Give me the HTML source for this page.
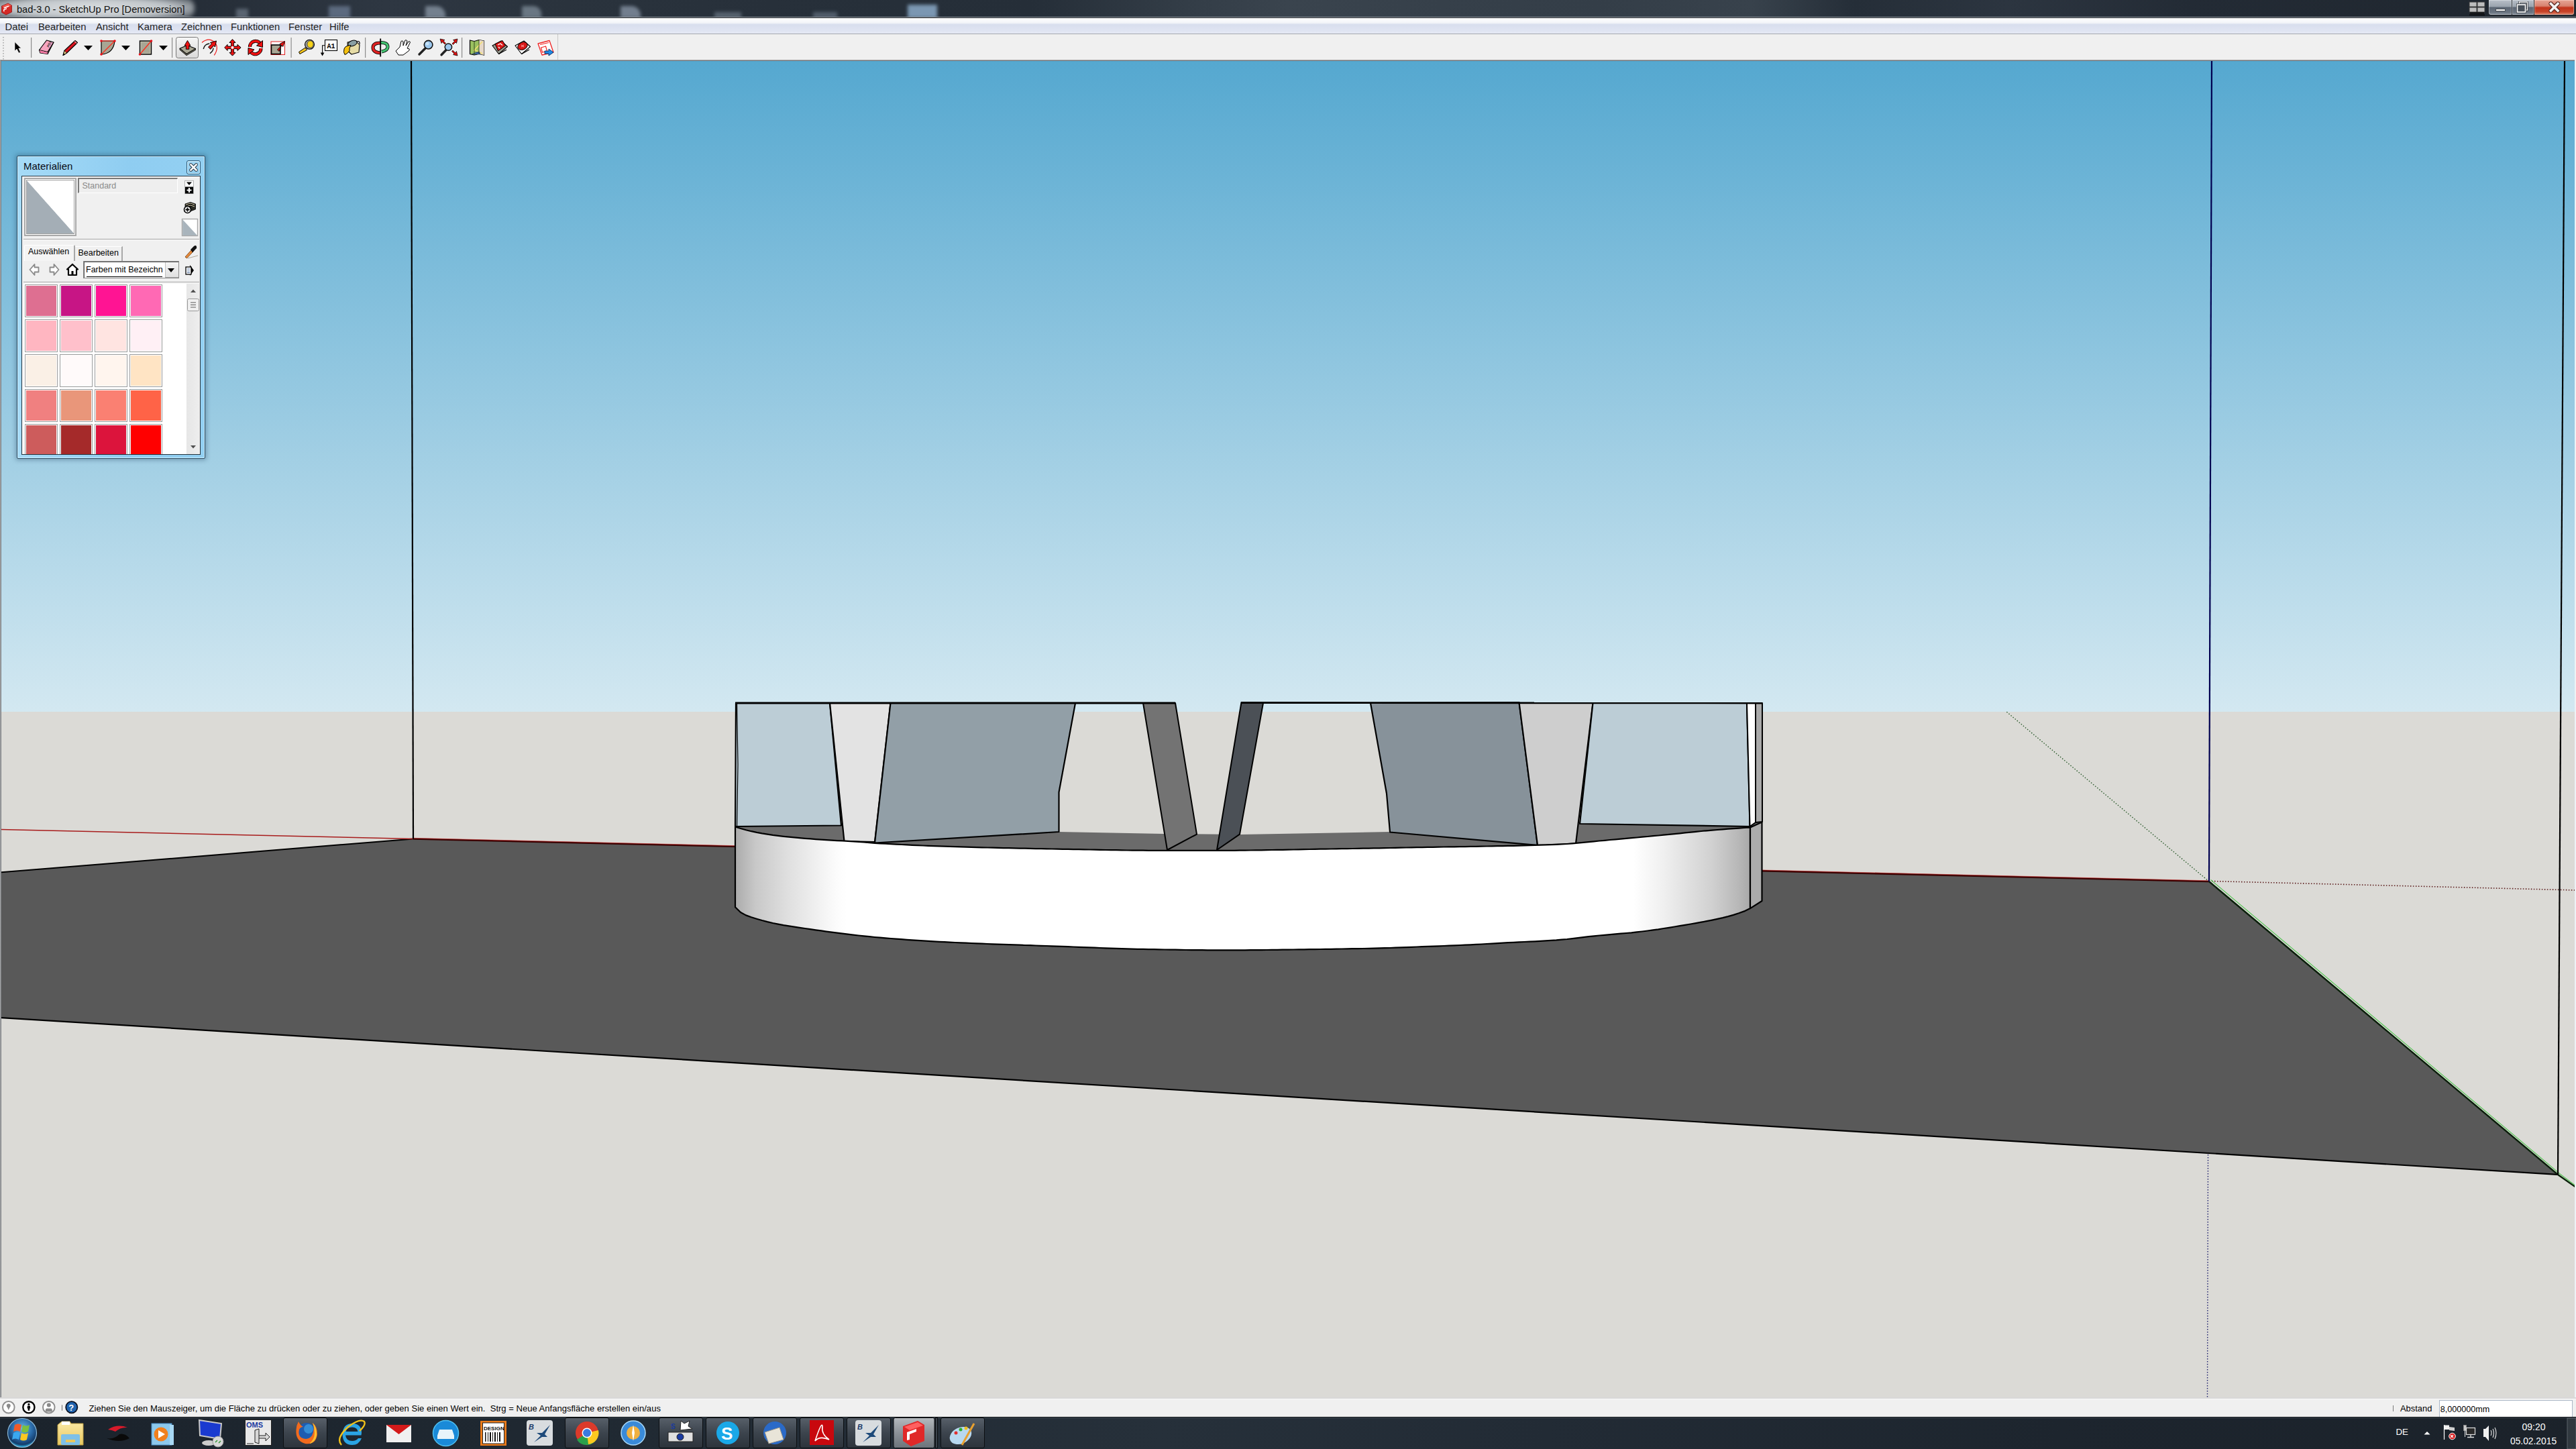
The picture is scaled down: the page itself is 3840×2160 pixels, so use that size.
<!DOCTYPE html>
<html><head><meta charset="utf-8">
<style>
*{margin:0;padding:0;box-sizing:border-box}
html,body{width:3840px;height:2160px;overflow:hidden;background:#f0f0f0;font-family:"Liberation Sans",sans-serif;position:relative}
.a{position:absolute}
#title{left:0;top:0;width:3840px;height:25px;overflow:hidden;background:linear-gradient(90deg,#222a33 0%,#252d37 7%,#2e3742 15%,#2a333d 22%,#27303a 30%,#252e38 40%,#333d47 46%,#3a444e 50%,#36404a 56%,#343e48 62%,#38424c 68%,#252e38 72%,#2c3540 78%,#232b35 85%,#1f262e 100%);}
#glow{left:-20px;top:-6px;width:310px;height:36px;border-radius:18px;background:radial-gradient(ellipse at 50% 50%,rgba(235,238,240,.92) 0%,rgba(220,225,228,.85) 55%,rgba(200,205,210,.0) 100%);filter:blur(3px)}
#ttext{left:25px;top:5.5px;font-size:14.6px;color:#101010;white-space:pre}
.wb{top:0;height:23px;border:1px solid #262b31;border-top:none}
#menu{left:0;top:27px;width:3840px;height:24px;background:linear-gradient(#fdfdfe 0%,#f3f5f9 30%,#d8deee 42%,#dfe4f2 80%,#e6e9f4 100%);border-bottom:1px solid #a4a8ae}
#menu span{position:absolute;top:4.5px;font-size:14.8px;color:#1e1e1e;white-space:pre}
#tb{left:0;top:51px;width:832px;height:38px;background:#f0f0f0;border-right:1px solid #c8c8c8}
#tb2{left:832px;top:51px;width:3008px;height:38px;background:#f0f0f0}
#vpb{left:0;top:89px;width:3840px;height:2px;background:linear-gradient(#a6a6a6 0,#a6a6a6 50%,#737980 50%,#737980 100%)}
#vpl{left:0;top:89px;width:2px;height:1995px;background:linear-gradient(90deg,#b4b4b4,#6a6e74)}
#vpr{left:3838px;top:89px;width:2px;height:1995px;background:#eef2f6}
#status{left:0;top:2083px;width:3840px;height:29px;background:#f0f0f0;border-top:1px solid #dcdcdc}
#task{left:0;top:2112px;width:3840px;height:48px;background:linear-gradient(90deg,#1b232c 0%,#1f2831 20%,#26303a 45%,#222b35 60%,#1d252e 80%,#1b222a 100%);border-top:1px solid #5b6670}
#mat{left:25px;top:232px;width:281px;height:452px;border:1px solid #2c4a60;border-radius:2px;background:linear-gradient(90deg,#a6dbf7 0%,#9ad4f4 30%,#8fcdf1 60%,#93d0f2 100%);box-shadow:0 0 6px 2px rgba(30,60,90,.35), inset 0 0 0 1px #c8ecfc}
.t13{font-size:12.5px;white-space:pre;color:#000}
</style></head><body>
<div id="title" class="a">
<div class="a" style="left:0;top:0;width:1500px;height:26px;filter:blur(2.5px)">
 <div class="a" style="left:352px;top:13px;width:18px;height:14px;background:rgba(150,165,180,.45)"></div>
 <div class="a" style="left:490px;top:9px;width:32px;height:18px;background:rgba(140,160,190,.5)"></div>
 <div class="a" style="left:634px;top:9px;width:30px;height:18px;background:rgba(175,190,205,.55);border-radius:2px 14px 0 0"></div>
 <div class="a" style="left:778px;top:9px;width:29px;height:18px;background:rgba(170,185,200,.5);border-radius:2px 12px 0 0"></div>
 <div class="a" style="left:925px;top:9px;width:30px;height:18px;background:rgba(175,190,210,.55);border-radius:2px 14px 0 0"></div>
 <div class="a" style="left:1065px;top:18px;width:40px;height:9px;background:rgba(160,175,190,.4)"></div>
 <div class="a" style="left:1212px;top:18px;width:36px;height:9px;background:rgba(150,165,185,.4)"></div>
 <div class="a" style="left:1353px;top:7px;width:44px;height:20px;background:rgba(160,195,230,.7)"></div>
</div>
 <div id="glow" class="a"></div>
 <svg class="a" style="left:1px;top:3px" width="18" height="20" viewBox="0 0 18 20">
  <path d="M1.5 6 L11 2 L16.5 5 L16.5 15 L8 19 L1.5 15.5 Z" fill="#d42a26" stroke="#901414" stroke-width=".8"/>
  <path d="M2 6.2 L11 2.5 L16 5.2 L7.5 9 Z" fill="#f05a50"/>
  <path d="M4 8.5 L11.5 5.5 L13 6.5 L5.5 9.8 Z M4 11 L9 9 L9 10.5 L5.5 12 L5.5 14.5 L4 13.8 Z" fill="#fff"/>
 </svg>
 <span id="ttext" class="a">bad-3.0 - SketchUp Pro [Demoversion]</span>
 <svg class="a" style="left:3680px;top:2px" width="26" height="22" viewBox="0 0 26 22">
  <rect x="1" y="1" width="11" height="7" fill="#bdbdbd" stroke="#3a3a3a" stroke-width="1"/><rect x="13" y="1" width="11" height="7" fill="#bdbdbd" stroke="#3a3a3a" stroke-width="1"/>
  <rect x="1" y="9" width="11" height="7" fill="#bdbdbd" stroke="#3a3a3a" stroke-width="1"/><rect x="13" y="9" width="11" height="7" fill="#bdbdbd" stroke="#3a3a3a" stroke-width="1"/>
  <rect x="2" y="16.5" width="21" height="2" fill="#111"/><rect x="1" y="19.5" width="23" height="1.5" fill="#0a0a0a"/>
 </svg>
 <div class="a wb" style="left:3709px;width:36px;border-radius:0 0 0 4px;background:linear-gradient(#b8bfc8 0%,#9aa3ad 45%,#5b6573 50%,#6c7682 85%,#8c96a1 100%);box-shadow:inset 0 0 0 1px rgba(255,255,255,.35)"></div>
 <div class="a" style="left:3720px;top:13px;width:15px;height:4px;background:#fff;border:1px solid #4a4f55"></div>
 <div class="a wb" style="left:3744px;width:34px;background:linear-gradient(#b8bfc8 0%,#9aa3ad 45%,#5b6573 50%,#6c7682 85%,#8c96a1 100%);box-shadow:inset 0 0 0 1px rgba(255,255,255,.35)"></div>
 <svg class="a" style="left:3751px;top:2px" width="20" height="18" viewBox="0 0 20 18">
  <rect x="4.5" y="1" width="12" height="12" fill="none" stroke="#2b2f35" stroke-width="3"/><rect x="4.5" y="1" width="12" height="12" fill="none" stroke="#fff" stroke-width="1.4"/>
  <rect x="1.5" y="5" width="12" height="11" fill="#3d444c" stroke="#2b2f35" stroke-width="3"/><rect x="1.5" y="5" width="12" height="11" fill="#4a525b" stroke="#fff" stroke-width="1.6"/>
 </svg>
 <div class="a wb" style="left:3777px;width:61px;border-radius:0 0 4px 0;background:linear-gradient(#e6a494 0%,#d88370 40%,#c2351c 52%,#c8452a 80%,#e08a70 100%);box-shadow:inset 0 0 0 1px rgba(255,230,220,.45)"></div>
 <svg class="a" style="left:3797px;top:2px" width="22" height="18" viewBox="0 0 22 18">
  <path d="M5.5 3.5 L16 14 M16 3.5 L5.5 14" stroke="#5e2a22" stroke-width="6.2" fill="none" stroke-linecap="round"/>
  <path d="M5.5 3.5 L16 14 M16 3.5 L5.5 14" stroke="#f2f2f2" stroke-width="3.6" fill="none" stroke-linecap="square"/>
 </svg>
</div>
<div class="a" style="left:0;top:25px;width:3840px;height:1px;background:#959da5"></div><div class="a" style="left:0;top:26px;width:3840px;height:1px;background:#1c2024"></div>
<div id="menu" class="a">
<span style="left:7.5px">Datei</span><span style="left:57px">Bearbeiten</span><span style="left:143px">Ansicht</span><span style="left:205px">Kamera</span><span style="left:270px">Zeichnen</span><span style="left:344px">Funktionen</span><span style="left:430px">Fenster</span><span style="left:491px">Hilfe</span>
</div>
<div id="tb" class="a"></div>
<div id="tb2" class="a"></div>
<svg class="a" style="left:0;top:50px" width="840" height="40" viewBox="0 50 840 40">
<defs>
<linearGradient id="btng" x1="0" y1="0" x2="0" y2="1"><stop offset="0" stop-color="#f6f6f6"/><stop offset="1" stop-color="#dadada"/></linearGradient>
</defs>
<!-- grip -->
<g fill="#b4b4b4"><rect x="4" y="55" width="2" height="1.5"/><rect x="4" y="59" width="2" height="1.5"/><rect x="4" y="63" width="2" height="1.5"/><rect x="4" y="67" width="2" height="1.5"/><rect x="4" y="71" width="2" height="1.5"/><rect x="4" y="75" width="2" height="1.5"/><rect x="4" y="79" width="2" height="1.5"/><rect x="4" y="83" width="2" height="1.5"/><rect x="4" y="87" width="2" height="1.5"/></g>
<!-- separators -->
<g fill="#8c8c8c"><rect x="46" y="56" width="1.2" height="30"/><rect x="256" y="56" width="1.2" height="30"/><rect x="433.5" y="56" width="1.2" height="30"/><rect x="544" y="56" width="1.2" height="30"/><rect x="688" y="56" width="1.2" height="30"/></g>
<!-- select arrow -->
<path d="M22 62.5 L22 76 L25 73 L28 79 L30.5 78 L27.8 72 L31.5 72 Z" fill="#000" stroke="#fff" stroke-width=".6"/>
<!-- eraser -->
<path d="M58.5 74.5 L69.5 60 L80 63 L71 80.5 L60 79 Z" fill="#f6a4c0" stroke="#000" stroke-width="1.2" stroke-linejoin="round"/>
<path d="M58.5 74.5 L71 77.5 L80 63 M71 77.5 L71 80.5" fill="none" stroke="#000" stroke-width="1.1"/>
<path d="M59 75 L71 78 L70.8 80.3 L60.2 78.8 Z" fill="#f47aa4"/>
<text x="71" y="72" font-size="5" font-weight="bold" transform="rotate(-62 71 70)" fill="#333">PDX</text>
<!-- pencil -->
<path d="M94 82.5 L96 75.5 L112 60.5 L115.5 63.5 L99.5 79 Z" fill="#d9141e" stroke="#000" stroke-width="1.1" stroke-linejoin="round"/>
<path d="M94 82.5 L96 75.5 L99.5 79 Z" fill="#e8d38a" stroke="#000" stroke-width=".8"/>
<path d="M94 82.5 L95 79.5 L97 81.5 Z" fill="#000"/>
<path d="M111 61.5 L114.5 64.5" stroke="#fff" stroke-width="1"/>
<!-- dropdown triangles -->
<g fill="#000"><path d="M125 68 L138 68 L131.5 75 Z"/><path d="M181 68 L194 68 L187.5 75 Z"/><path d="M237 68 L250 68 L243.5 75 Z"/></g>
<!-- arc/shape icon -->
<path d="M151 61 L151 81 Q169 80 171 61 Z" fill="#a8a694" stroke="#000" stroke-width="1.2"/>
<path d="M151 61 L171 61 M151 81 L171 61" stroke="#ff2a1a" stroke-width="1.2"/>
<g fill="#e8101a"><circle cx="151" cy="61" r="1.8"/><circle cx="171" cy="61" r="1.8"/><circle cx="151" cy="81" r="1.8"/></g>
<!-- rectangle icon -->
<rect x="208.5" y="61" width="17" height="20" fill="#a8a694" stroke="#000" stroke-width="1.4"/>
<rect x="210" y="62.5" width="14" height="17" fill="none" stroke="#c8c6b4" stroke-width=".8"/>
<path d="M208.5 81 L225.5 61" stroke="#ff2a1a" stroke-width="1.3"/>
<g fill="#e8101a"><circle cx="225.5" cy="61" r="1.8"/><circle cx="208.5" cy="81" r="1.8"/></g>
<!-- push/pull selected button -->
<rect x="262.5" y="55.5" width="33" height="31" rx="3" fill="url(#btng)" stroke="#777" stroke-width="1"/>
<path d="M268 72.3 L279 67.5 L291.5 72.6 L278 80.5 Z" fill="#a8a694" stroke="#000" stroke-width="1.1" stroke-linejoin="round"/>
<path d="M268 72.3 L268 74.3 L278 82.7 L291.5 74.6 L291.5 72.6 L278 80.5 Z" fill="#6e6c5e" stroke="#000" stroke-width=".8"/>
<path d="M275 68 L279.5 60.4 L284 68 L281.8 68 L281.8 73.3 L277.3 73.3 L277.3 68 Z" fill="#ee1111" stroke="#000" stroke-width=".9" stroke-linejoin="round"/>
<!-- follow me -->
<path d="M301 63.5 Q311 55 320 63 Q327 71 319.3 82.4" fill="none" stroke="#ee1c1c" stroke-width="1.2"/>
<path d="M303.2 73 Q305 65.5 312.3 65" fill="none" stroke="#111" stroke-width="1.4"/>
<path d="M313 79.6 Q318 76.5 317.9 71.6" fill="none" stroke="#111" stroke-width="1.4"/>
<path d="M310.5 70 L315.5 65.5 L313.5 63.5 L322.5 61 L320.5 70 L318.5 68 L313.8 73.5 Z" fill="#ee1111" stroke="#000" stroke-width="1" stroke-linejoin="round"/>
<!-- move -->
<path d="M346.5 58.6 L351 63.5 L348.3 63.5 L348.3 69.1 L353.9 69.1 L353.9 66.4 L359.1 70.9 L353.9 75.4 L353.9 72.7 L348.3 72.7 L348.3 78.3 L351 78.3 L346.5 83.1 L342 78.3 L344.7 78.3 L344.7 72.7 L339.1 72.7 L339.1 75.4 L334.7 70.9 L339.1 66.4 L339.1 69.1 L344.7 69.1 L344.7 63.5 L342 63.5 Z" fill="#ee1111" stroke="#000" stroke-width="1" stroke-linejoin="round"/>
<rect x="344.7" y="69.1" width="3.6" height="3.6" fill="#fff"/>
<!-- rotate -->
<path d="M372.5 70 A8.5 8.5 0 0 1 388 65" fill="none" stroke="#000" stroke-width="5.2"/>
<path d="M372.5 70 A8.5 8.5 0 0 1 388 65" fill="none" stroke="#ee1111" stroke-width="3.4"/>
<path d="M389 72 A8.5 8.5 0 0 1 373.5 77" fill="none" stroke="#000" stroke-width="5.2"/>
<path d="M389 72 A8.5 8.5 0 0 1 373.5 77" fill="none" stroke="#ee1111" stroke-width="3.4"/>
<path d="M391.5 60.5 L391.5 70.5 L382.5 68 Z" fill="#ee1111" stroke="#000" stroke-width="1"/>
<path d="M370 81.5 L370 71.5 L379 74 Z" fill="#ee1111" stroke="#000" stroke-width="1"/>
<!-- scale -->
<rect x="404" y="62" width="20.5" height="19.5" fill="#fff" stroke="#e02020" stroke-width="1"/>
<rect x="404.5" y="67" width="13.5" height="13.5" fill="#a8a694" stroke="#000" stroke-width="1.6"/>
<path d="M413.5 74 L419.5 68 L417 65.5 L424.5 61.5 L421.8 69.5 L419.8 67.6 L416 76.5 Z" fill="#ee1111" stroke="#000" stroke-width=".9" stroke-linejoin="round"/>
<!-- tape measure -->
<path d="M447 80.5 L445.5 77.5 L455 71 L457.5 74.5 Z" fill="#f2c21a" stroke="#000" stroke-width="1"/>
<circle cx="461.5" cy="66.3" r="7" fill="#9a9a9a" stroke="#000" stroke-width="1.1"/>
<ellipse cx="462.5" cy="66" rx="4.6" ry="5.2" fill="#f6d21a" stroke="#333" stroke-width=".8"/>
<!-- text tool -->
<rect x="484.5" y="59.5" width="18" height="16" fill="#fff" stroke="#000" stroke-width="1.1"/>
<text x="487.5" y="71.5" font-family="Liberation Mono" font-size="10" font-weight="bold" fill="#000">A1</text>
<path d="M484.5 67.7 L480.6 67.7 L480.6 80" fill="none" stroke="#000" stroke-width="1.1"/>
<path d="M477.8 78.5 L483.4 78.5 L480.6 83.5 Z" fill="#000"/>
<!-- paint bucket -->
<path d="M518 63 L530 60.5 L536 67 L535 78 L524 81 L518.5 76 Z" fill="#e6dca6" stroke="#000" stroke-width="1.1" stroke-linejoin="round"/>
<ellipse cx="525.5" cy="64.5" rx="7" ry="4" fill="#8aa0a4" stroke="#000" stroke-width="1" transform="rotate(-20 525.5 64.5)"/>
<path d="M531 62 Q537 60 536 66" fill="none" stroke="#000" stroke-width="1.2"/>
<path d="M513 73 Q514 68 523 67.5 Q520 72 521 76 Q517 81 514 81.5 Q511.5 78 513 73 Z" fill="#f4c010" stroke="#000" stroke-width="1"/>
<!-- orbit -->
<path d="M556 71 Q556 64 567 64" fill="none" stroke="#000" stroke-width="5"/>
<path d="M556 71 Q556 78 567 79" fill="none" stroke="#000" stroke-width="5"/>
<path d="M556 71 Q556 64 567 64 M556 71 Q556 78 567 79" fill="none" stroke="#dd2222" stroke-width="3.4"/>
<path d="M567 63.5 Q578 63 578 70 Q578 75 569 77" fill="none" stroke="#000" stroke-width="5"/>
<path d="M567 63.5 Q578 63 578 70 Q578 75 569 77" fill="none" stroke="#44c070" stroke-width="3.4"/>
<rect x="566.3" y="57.5" width="1.8" height="27" fill="#000"/>
<!-- pan hand -->
<path d="M590 76 L596 70 L598 61.5 Q600 60 601 62 L601 68 L604 60 Q606 59 607 61 L605 68 L609 62 Q611 61 611.5 63 L607 72 L610 73 Q611 75 609 76 L601 82 L594 82 Z" fill="#fff" stroke="#000" stroke-width="1" stroke-linejoin="round"/>
<!-- zoom -->
<path d="M625 81 L634 72" stroke="#222" stroke-width="3.4" stroke-linecap="round"/>
<circle cx="638.6" cy="66.7" r="6.3" fill="#9cc8ee" stroke="#111" stroke-width="1.6"/>
<circle cx="637" cy="65" r="2.5" fill="#c8e4fa"/>
<!-- zoom extents -->
<path d="M658 81.8 L665 74.5" stroke="#222" stroke-width="3.4" stroke-linecap="round"/>
<circle cx="668.4" cy="70.1" r="5.2" fill="#9cc8ee" stroke="#111" stroke-width="1.5"/>
<g fill="#dd1111" stroke="#000" stroke-width=".7" stroke-linejoin="round">
<path d="M656 58 L663 59.5 L661 61 L664.5 64.5 L663 66 L659.5 62.5 L658 64.5 Z"/>
<path d="M682 58 L680.5 64.5 L679 63 L675.5 66.5 L674 65 L677.5 61.5 L675.5 59.5 Z"/>
<path d="M682 83 L675.5 81.5 L677 80 L673.5 76.5 L675 75 L678.5 78.5 L680.5 76.5 Z"/>
</g>
<!-- map -->
<path d="M700.5 60 L707 61.5 L714 59.5 L721.5 61 L721.5 82 L714 80.5 L707 82 L700.5 80.5 Z" fill="#9ac060" stroke="#000" stroke-width="1.2"/>
<path d="M714 59.5 L721.5 61 L721.5 82 L714 80.5 Z" fill="#e6d8c8"/>
<path d="M706 76 L719 62 M707 74 L719 80" stroke="#f2e070" stroke-width="1.6"/>
<path d="M704 80.5 L714 77 L716 81" fill="#3a60a0" stroke="#2a4070" stroke-width="1"/>
<path d="M707 61.5 L707 82 M714 59.5 L714 80.5" stroke="#203010" stroke-width=".8"/>
<!-- warehouse 1 -->
<path d="M734 68 L747 61 L756.5 69.5 L743.5 80.5 Z" fill="#9c9c90" stroke="#000" stroke-width="1.1" stroke-linejoin="round"/>
<path d="M738 65.5 L749 60.5 L753.5 68 L742.5 76 Z" fill="#d81818" stroke="#000" stroke-width="1" stroke-linejoin="round"/>
<path d="M742 67 L746 65 L749 67.5 M743 70 L745 72" stroke="#fff" stroke-width="1.3" fill="none"/>
<path d="M743.5 80.5 L755 74" stroke="#000" stroke-width="1.2"/>
<!-- warehouse 2 -->
<path d="M768 68 L781 61 L790.5 69.5 L777.5 80.5 Z" fill="#fff" stroke="#000" stroke-width="1.1" stroke-linejoin="round"/>
<ellipse cx="779" cy="68.5" rx="7.5" ry="5.5" fill="#d81818" stroke="#000" stroke-width=".9" transform="rotate(-25 779 68.5)"/>
<path d="M777 67 L781 70 M781 67 L777 70" stroke="#fbb" stroke-width="1"/>
<path d="M777.5 80.5 L789 74" stroke="#000" stroke-width="1.2"/>
<!-- export -->
<path d="M802 65 L819 60.5 L825 78 L808 82 Z" fill="#fff" stroke="#ee2222" stroke-width="1.3" stroke-linejoin="round"/>
<path d="M805 66.5 L818 63.5 M806.5 71 L813.5 69 L815.5 76 L808.5 78 Z" fill="none" stroke="#ee2222" stroke-width="1.2"/>
<path d="M812 76 L818 76 L818 73 L825 78 L818 83 L818 80 L812 80 Z" fill="#1e8ae6" stroke="#0a2a60" stroke-width=".9" stroke-linejoin="round"/>
</svg>

<div id="vpb" class="a"></div>
<svg class="a" style="left:0;top:0" width="3840" height="2160" viewBox="0 0 3840 2160">
<defs>
<linearGradient id="sky" x1="0" y1="91" x2="0" y2="1061" gradientUnits="userSpaceOnUse">
<stop offset="0" stop-color="#55a8d0"/><stop offset="1" stop-color="#d3e8f1"/>
</linearGradient>
<clipPath id="vpc"><rect x="2" y="91" width="3836" height="1992"/></clipPath>
</defs>
<g clip-path="url(#vpc)">
<rect x="0" y="91" width="3840" height="970" fill="url(#sky)"/>
<rect x="0" y="1061" width="3840" height="1022" fill="#dbdad6"/>
<polygon points="0,1300.5 616,1250.5 3293,1314 3813,1751 0,1517" fill="#595959"/>
<polyline points="0,1300.5 616,1250.5" stroke="#000" stroke-width="2" fill="none"/>
<polyline points="0,1517 3813,1751" stroke="#000" stroke-width="2.2" fill="none"/>
<polyline points="0,1236.5 616,1250.5" stroke="#a81c1c" stroke-width="1.5" fill="none"/>
<polyline points="616,1250.5 3293,1314" stroke="#3a0000" stroke-width="2.6" fill="none"/>
<polyline points="616,1249.3 3293,1312.8" stroke="#d03030" stroke-width="1" fill="none" opacity=".6"/>
<polyline points="3297,1313.5 3840,1327" stroke="#5a1a1a" stroke-width="1.6" stroke-dasharray="1.5 2.5" fill="none"/>
<polyline points="3293,1314 2991,1061" stroke="#2a5a2a" stroke-width="1.4" stroke-dasharray="1.5 2.5" fill="none"/>
<polyline points="3293,1314 3813,1751 3840,1770" stroke="#0a200a" stroke-width="2.4" fill="none"/>
<polyline points="3295.5,1311.5 3815.5,1749.5 3840,1768" stroke="#40c040" stroke-width="1.2" fill="none" opacity="0.85"/>
<polyline points="3297,91 3293,1314" stroke="#000050" stroke-width="2.2" fill="none"/>
<polyline points="3291.5,1721 3290.5,2083" stroke="#1a1a6a" stroke-width="1.4" stroke-dasharray="1.5 2.5" fill="none"/>
<polyline points="613,91 616,1250.5" stroke="#000" stroke-width="2.2" fill="none"/>
<polyline points="3823,91 3813,1751" stroke="#000" stroke-width="2.2" fill="none"/>
<polygon points="1096.0,1228.0 1254.0,1228.0 1400.0,1250.0 1578.0,1240.0 1735.0,1243.0 1850.0,1244.0 2072.0,1240.0 2300.0,1245.0 2354.0,1228.0 2627.0,1224.0 2609.0,1233.4 2608.0,1233.5 2600.0,1234.0 2592.0,1234.6 2584.0,1235.1 2576.0,1235.7 2568.0,1236.3 2560.0,1237.0 2552.0,1237.6 2544.0,1238.3 2536.0,1239.0 2528.0,1239.8 2520.0,1240.6 2512.0,1241.4 2504.0,1242.3 2496.0,1243.1 2488.0,1243.9 2480.0,1244.7 2472.0,1245.5 2464.0,1246.2 2456.0,1247.0 2448.0,1247.7 2440.0,1248.5 2432.0,1249.2 2424.0,1249.9 2416.0,1250.6 2408.0,1251.3 2400.0,1252.0 2392.0,1252.8 2384.0,1253.5 2376.0,1254.3 2368.0,1255.1 2360.0,1255.9 2352.0,1256.7 2344.0,1257.4 2336.0,1258.0 2328.0,1258.5 2320.0,1258.9 2312.0,1259.2 2304.0,1259.5 2296.0,1259.7 2288.0,1259.9 2280.0,1260.2 2272.0,1260.4 2264.0,1260.6 2256.0,1260.8 2248.0,1260.9 2240.0,1261.1 2232.0,1261.2 2224.0,1261.4 2216.0,1261.5 2208.0,1261.7 2200.0,1261.8 2192.0,1261.9 2184.0,1262.1 2176.0,1262.2 2168.0,1262.3 2160.0,1262.4 2152.0,1262.5 2144.0,1262.7 2136.0,1262.8 2128.0,1262.9 2120.0,1263.1 2112.0,1263.2 2104.0,1263.4 2096.0,1263.5 2088.0,1263.7 2080.0,1263.8 2072.0,1264.0 2064.0,1264.1 2056.0,1264.3 2048.0,1264.4 2040.0,1264.6 2032.0,1264.7 2024.0,1264.8 2016.0,1265.0 2008.0,1265.1 2000.0,1265.2 1992.0,1265.4 1984.0,1265.5 1976.0,1265.6 1968.0,1265.7 1960.0,1265.9 1952.0,1266.0 1944.0,1266.2 1936.0,1266.3 1928.0,1266.5 1920.0,1266.6 1912.0,1266.8 1904.0,1266.9 1896.0,1267.0 1888.0,1267.2 1880.0,1267.3 1872.0,1267.4 1864.0,1267.5 1856.0,1267.6 1848.0,1267.7 1840.0,1267.8 1832.0,1267.8 1824.0,1267.9 1816.0,1267.9 1808.0,1267.9 1800.0,1267.9 1792.0,1267.9 1784.0,1267.9 1776.0,1267.9 1768.0,1267.9 1760.0,1267.9 1752.0,1267.9 1744.0,1267.9 1736.0,1267.9 1728.0,1267.9 1720.0,1267.8 1712.0,1267.8 1704.0,1267.7 1696.0,1267.7 1688.0,1267.6 1680.0,1267.5 1672.0,1267.4 1664.0,1267.2 1656.0,1267.1 1648.0,1267.0 1640.0,1266.8 1632.0,1266.7 1624.0,1266.5 1616.0,1266.4 1608.0,1266.2 1600.0,1266.1 1592.0,1265.9 1584.0,1265.8 1576.0,1265.7 1568.0,1265.5 1560.0,1265.4 1552.0,1265.2 1544.0,1265.1 1536.0,1264.9 1528.0,1264.7 1520.0,1264.6 1512.0,1264.4 1504.0,1264.2 1496.0,1264.1 1488.0,1263.9 1480.0,1263.7 1472.0,1263.5 1464.0,1263.3 1456.0,1263.1 1448.0,1262.9 1440.0,1262.6 1432.0,1262.4 1424.0,1262.2 1416.0,1261.9 1408.0,1261.7 1400.0,1261.4 1392.0,1261.1 1384.0,1260.8 1376.0,1260.5 1368.0,1260.2 1360.0,1259.8 1352.0,1259.4 1344.0,1259.0 1336.0,1258.6 1328.0,1258.2 1320.0,1257.7 1312.0,1257.3 1304.0,1256.8 1296.0,1256.2 1288.0,1255.5 1280.0,1254.9 1272.0,1254.3 1264.0,1253.9 1256.0,1253.4 1248.0,1253.1 1240.0,1252.7 1232.0,1252.2 1224.0,1251.7 1216.0,1251.1 1208.0,1250.4 1200.0,1249.8 1192.0,1249.1 1184.0,1248.3 1176.0,1247.6 1168.0,1246.8 1160.0,1245.9 1152.0,1244.9 1144.0,1243.7 1136.0,1242.4 1128.0,1240.9 1120.0,1239.2 1112.0,1237.2 1104.0,1235.0 1096.0,1232.5" fill="#6b6b6b"/>
<polygon points="1097.0,1048.0 1237.0,1048.0 1254.0,1230.5 1096.0,1232.0" fill="#bccdd6" stroke="#000" stroke-width="2.2" stroke-linejoin="round"/>
<polygon points="1237.0,1048.0 1327.5,1048.0 1304.0,1255.0 1258.5,1254.0" fill="#e3e3e3" stroke="#000" stroke-width="2.2" stroke-linejoin="round"/>
<polygon points="1327.5,1048.0 1603.0,1048.0 1578.5,1181.0 1578.5,1240.0 1304.0,1256.5" fill="#929fa7" stroke="#000" stroke-width="2.2" stroke-linejoin="round"/>
<polygon points="1704.0,1048.0 1752.0,1048.0 1784.0,1243.6 1740.0,1267.0" fill="#737373" stroke="#000" stroke-width="2" stroke-linejoin="round"/>
<polygon points="1850.5,1047.0 1883.0,1048.0 1848.0,1243.6 1814.0,1267.0" fill="#4b5056" stroke="#000" stroke-width="2" stroke-linejoin="round"/>
<polygon points="2043.0,1048.0 2264.6,1047.0 2292.0,1260.0 2072.0,1240.5 2067.0,1183.0" fill="#87929a" stroke="#000" stroke-width="2.2" stroke-linejoin="round"/>
<polygon points="2264.6,1048.0 2374.5,1048.0 2349.0,1257.6 2292.0,1260.0" fill="#cecece" stroke="#000" stroke-width="2.2" stroke-linejoin="round"/>
<polygon points="2374.5,1048.0 2604.0,1048.0 2608.5,1232.0 2355.0,1228.0" fill="#bccdd6" stroke="#000" stroke-width="2.2" stroke-linejoin="round"/>
<polygon points="2604.0,1048.0 2617.0,1048.0 2617.0,1226.0 2608.5,1232.0" fill="#ffffff" stroke="#000" stroke-width="2" stroke-linejoin="round"/>
<polygon points="2617.0,1048.0 2627.0,1048.0 2627.0,1225.0 2617.0,1226.0" fill="#a9a9a9" stroke="#000" stroke-width="2" stroke-linejoin="round"/>
<linearGradient id="bandg" x1="1096" y1="0" x2="2609" y2="0" gradientUnits="userSpaceOnUse"><stop offset="0" stop-color="#ababab"/><stop offset="0.02" stop-color="#c8c8c8"/><stop offset="0.05" stop-color="#dedede"/><stop offset="0.08" stop-color="#f0f0f0"/><stop offset="0.1" stop-color="#fcfcfc"/><stop offset="0.11" stop-color="#fff"/><stop offset="0.885" stop-color="#fff"/><stop offset="0.914" stop-color="#f0f0f0"/><stop offset="0.963" stop-color="#d0d0d0"/><stop offset="0.988" stop-color="#b8b8b8"/><stop offset="1" stop-color="#a8a8a8"/></linearGradient>
<polygon points="1096.0,1232.5 1104.0,1235.0 1112.0,1237.2 1120.0,1239.2 1128.0,1240.9 1136.0,1242.4 1144.0,1243.7 1152.0,1244.9 1160.0,1245.9 1168.0,1246.8 1176.0,1247.6 1184.0,1248.3 1192.0,1249.1 1200.0,1249.8 1208.0,1250.4 1216.0,1251.1 1224.0,1251.7 1232.0,1252.2 1240.0,1252.7 1248.0,1253.1 1256.0,1253.4 1264.0,1253.9 1272.0,1254.3 1280.0,1254.9 1288.0,1255.5 1296.0,1256.2 1304.0,1256.8 1312.0,1257.3 1320.0,1257.7 1328.0,1258.2 1336.0,1258.6 1344.0,1259.0 1352.0,1259.4 1360.0,1259.8 1368.0,1260.2 1376.0,1260.5 1384.0,1260.8 1392.0,1261.1 1400.0,1261.4 1408.0,1261.7 1416.0,1261.9 1424.0,1262.2 1432.0,1262.4 1440.0,1262.6 1448.0,1262.9 1456.0,1263.1 1464.0,1263.3 1472.0,1263.5 1480.0,1263.7 1488.0,1263.9 1496.0,1264.1 1504.0,1264.2 1512.0,1264.4 1520.0,1264.6 1528.0,1264.7 1536.0,1264.9 1544.0,1265.1 1552.0,1265.2 1560.0,1265.4 1568.0,1265.5 1576.0,1265.7 1584.0,1265.8 1592.0,1265.9 1600.0,1266.1 1608.0,1266.2 1616.0,1266.4 1624.0,1266.5 1632.0,1266.7 1640.0,1266.8 1648.0,1267.0 1656.0,1267.1 1664.0,1267.2 1672.0,1267.4 1680.0,1267.5 1688.0,1267.6 1696.0,1267.7 1704.0,1267.7 1712.0,1267.8 1720.0,1267.8 1728.0,1267.9 1736.0,1267.9 1744.0,1267.9 1752.0,1267.9 1760.0,1267.9 1768.0,1267.9 1776.0,1267.9 1784.0,1267.9 1792.0,1267.9 1800.0,1267.9 1808.0,1267.9 1816.0,1267.9 1824.0,1267.9 1832.0,1267.8 1840.0,1267.8 1848.0,1267.7 1856.0,1267.6 1864.0,1267.5 1872.0,1267.4 1880.0,1267.3 1888.0,1267.2 1896.0,1267.0 1904.0,1266.9 1912.0,1266.8 1920.0,1266.6 1928.0,1266.5 1936.0,1266.3 1944.0,1266.2 1952.0,1266.0 1960.0,1265.9 1968.0,1265.7 1976.0,1265.6 1984.0,1265.5 1992.0,1265.4 2000.0,1265.2 2008.0,1265.1 2016.0,1265.0 2024.0,1264.8 2032.0,1264.7 2040.0,1264.6 2048.0,1264.4 2056.0,1264.3 2064.0,1264.1 2072.0,1264.0 2080.0,1263.8 2088.0,1263.7 2096.0,1263.5 2104.0,1263.4 2112.0,1263.2 2120.0,1263.1 2128.0,1262.9 2136.0,1262.8 2144.0,1262.7 2152.0,1262.5 2160.0,1262.4 2168.0,1262.3 2176.0,1262.2 2184.0,1262.1 2192.0,1261.9 2200.0,1261.8 2208.0,1261.7 2216.0,1261.5 2224.0,1261.4 2232.0,1261.2 2240.0,1261.1 2248.0,1260.9 2256.0,1260.8 2264.0,1260.6 2272.0,1260.4 2280.0,1260.2 2288.0,1259.9 2296.0,1259.7 2304.0,1259.5 2312.0,1259.2 2320.0,1258.9 2328.0,1258.5 2336.0,1258.0 2344.0,1257.4 2352.0,1256.7 2360.0,1255.9 2368.0,1255.1 2376.0,1254.3 2384.0,1253.5 2392.0,1252.8 2400.0,1252.0 2408.0,1251.3 2416.0,1250.6 2424.0,1249.9 2432.0,1249.2 2440.0,1248.5 2448.0,1247.7 2456.0,1247.0 2464.0,1246.2 2472.0,1245.5 2480.0,1244.7 2488.0,1243.9 2496.0,1243.1 2504.0,1242.3 2512.0,1241.4 2520.0,1240.6 2528.0,1239.8 2536.0,1239.0 2544.0,1238.3 2552.0,1237.6 2560.0,1237.0 2568.0,1236.3 2576.0,1235.7 2584.0,1235.1 2592.0,1234.6 2600.0,1234.0 2608.0,1233.5 2609.0,1233.4 2609.0,1353.9 2608.0,1354.5 2600.0,1358.4 2592.0,1361.3 2584.0,1363.9 2576.0,1366.1 2568.0,1368.1 2560.0,1369.9 2552.0,1371.6 2544.0,1373.2 2536.0,1374.7 2528.0,1376.1 2520.0,1377.5 2512.0,1378.8 2504.0,1380.1 2496.0,1381.5 2488.0,1382.8 2480.0,1384.0 2472.0,1385.3 2464.0,1386.4 2456.0,1387.5 2448.0,1388.5 2440.0,1389.4 2432.0,1390.3 2424.0,1391.0 2416.0,1391.7 2408.0,1392.4 2400.0,1393.1 2392.0,1393.8 2384.0,1394.5 2376.0,1395.3 2368.0,1396.2 2360.0,1397.2 2352.0,1398.1 2344.0,1399.1 2336.0,1400.0 2328.0,1400.7 2320.0,1401.4 2312.0,1401.9 2304.0,1402.4 2296.0,1402.9 2288.0,1403.3 2280.0,1403.6 2272.0,1404.0 2264.0,1404.4 2256.0,1404.8 2248.0,1405.2 2240.0,1405.6 2232.0,1406.1 2224.0,1406.6 2216.0,1407.0 2208.0,1407.5 2200.0,1407.9 2192.0,1408.3 2184.0,1408.7 2176.0,1409.0 2168.0,1409.4 2160.0,1409.7 2152.0,1410.0 2144.0,1410.3 2136.0,1410.6 2128.0,1410.8 2120.0,1411.2 2112.0,1411.5 2104.0,1411.8 2096.0,1412.1 2088.0,1412.4 2080.0,1412.7 2072.0,1413.0 2064.0,1413.2 2056.0,1413.4 2048.0,1413.6 2040.0,1413.8 2032.0,1414.0 2024.0,1414.1 2016.0,1414.2 2008.0,1414.4 2000.0,1414.5 1992.0,1414.6 1984.0,1414.8 1976.0,1414.9 1968.0,1415.0 1960.0,1415.1 1952.0,1415.2 1944.0,1415.3 1936.0,1415.4 1928.0,1415.5 1920.0,1415.6 1912.0,1415.7 1904.0,1415.8 1896.0,1415.9 1888.0,1416.0 1880.0,1416.1 1872.0,1416.1 1864.0,1416.2 1856.0,1416.3 1848.0,1416.3 1840.0,1416.4 1832.0,1416.4 1824.0,1416.4 1816.0,1416.4 1808.0,1416.3 1800.0,1416.3 1792.0,1416.2 1784.0,1416.1 1776.0,1416.1 1768.0,1416.0 1760.0,1415.9 1752.0,1415.7 1744.0,1415.6 1736.0,1415.5 1728.0,1415.4 1720.0,1415.2 1712.0,1415.1 1704.0,1414.9 1696.0,1414.8 1688.0,1414.6 1680.0,1414.4 1672.0,1414.1 1664.0,1413.9 1656.0,1413.6 1648.0,1413.3 1640.0,1413.0 1632.0,1412.7 1624.0,1412.4 1616.0,1412.1 1608.0,1411.8 1600.0,1411.5 1592.0,1411.2 1584.0,1410.9 1576.0,1410.6 1568.0,1410.3 1560.0,1410.0 1552.0,1409.8 1544.0,1409.5 1536.0,1409.2 1528.0,1409.0 1520.0,1408.7 1512.0,1408.4 1504.0,1408.1 1496.0,1407.8 1488.0,1407.6 1480.0,1407.3 1472.0,1407.0 1464.0,1406.7 1456.0,1406.3 1448.0,1406.0 1440.0,1405.7 1432.0,1405.3 1424.0,1405.0 1416.0,1404.6 1408.0,1404.2 1400.0,1403.8 1392.0,1403.4 1384.0,1402.9 1376.0,1402.4 1368.0,1401.9 1360.0,1401.4 1352.0,1400.8 1344.0,1400.2 1336.0,1399.6 1328.0,1399.0 1320.0,1398.3 1312.0,1397.7 1304.0,1397.0 1296.0,1396.2 1288.0,1395.4 1280.0,1394.5 1272.0,1393.6 1264.0,1392.7 1256.0,1391.7 1248.0,1390.7 1240.0,1389.7 1232.0,1388.6 1224.0,1387.4 1216.0,1386.3 1208.0,1385.1 1200.0,1384.0 1192.0,1382.9 1184.0,1381.7 1176.0,1380.4 1168.0,1379.1 1160.0,1377.6 1152.0,1376.0 1144.0,1374.1 1136.0,1372.0 1128.0,1369.7 1120.0,1367.3 1112.0,1364.4 1104.0,1360.0 1096.0,1352.2" fill="url(#bandg)" stroke="#000" stroke-width="2.2" stroke-linejoin="round"/>
<polygon points="2609.0,1233.4 2626.5,1225.5 2626.5,1343.0 2609.0,1354.1" fill="#ababab" stroke="#000" stroke-width="2.2" stroke-linejoin="round"/>
<polyline points="1096,1048 1752,1048" stroke="#000" stroke-width="2.8" fill="none"/>
<polyline points="1850,1047.5 2627,1048" stroke="#000" stroke-width="2.8" fill="none"/>
<polyline points="1098.5,1049 1100,1140 1098.5,1232" stroke="#000" stroke-width="1.2" fill="none"/>
</g>
</svg>
<div id="vpl" class="a"></div>
<div id="vpr" class="a"></div>
<div id="mat" class="a">
 <span class="a" style="left:9px;top:5.5px;font-size:15px;color:#0a0a14;white-space:pre">Materialien</span>
 <div class="a" style="left:252px;top:5.5px;width:21px;height:21px;border:1px solid #2f5a78;border-radius:3px;background:linear-gradient(#a4d8f4,#90ccee);box-shadow:inset 0 0 0 1px #cdeefc"></div>
 <svg class="a" style="left:255px;top:8.5px" width="15" height="15" viewBox="0 0 15 15"><path d="M3.5 3.5 L11.5 11.5 M11.5 3.5 L3.5 11.5" stroke="#2a3a48" stroke-width="4.6" stroke-linecap="round"/><path d="M3.5 3.5 L11.5 11.5 M11.5 3.5 L3.5 11.5" stroke="#fff" stroke-width="2.6" stroke-linecap="square"/></svg>
 <div class="a" style="left:6px;top:28.5px;width:267px;height:416px;background:#f0f0f0;border:1px solid #24323c;box-shadow:inset 1px 1px 0 #fff">
  <!-- preview swatch -->
  <div class="a" style="left:3px;top:2px;width:78px;height:87px;border:2px solid #a8a8a8;box-shadow:inset 0 0 0 1px #fff, inset 0 0 0 2px #a0a0a0;background:linear-gradient(to top right,#a4aeb6 0%,#a4aeb6 49.6%,#fff 50.4%,#fff 100%)"></div>
  <!-- name field -->
  <div class="a" style="left:83px;top:2.5px;width:149px;height:23px;background:#eeeeee;border-top:2px solid #7a7a7a;border-left:2px solid #7a7a7a;border-bottom:1px solid #fff;border-right:1px solid #fff"></div>
  <span class="a t13" style="left:89.5px;top:7px;color:#8a8a8a">Standard</span>
  <!-- right icons -->
  <svg class="a" style="left:236px;top:3px" width="30" height="92" viewBox="236 4 30 92">
   <rect x="242.5" y="7.3" width="13" height="19.3" fill="#fff" stroke="#b0b0b0" stroke-width="1"/>
   <rect x="243" y="16.5" width="12" height="10" fill="#000"/>
   <path d="M245 9.5 L253 9.5 L249 14 Z" fill="#000"/>
   <path d="M249 18 L249 25 M245.5 21.5 L252.5 21.5" stroke="#fff" stroke-width="2.2"/>
   <path d="M243 42 L251 39.5 L258.5 42 L258.5 50 L250.5 53 L243 50 Z" fill="#2a2a24" stroke="#000" stroke-width=".8"/>
   <path d="M244 43 L251 41 L257 43 M244 46 L251 44 L257 46" stroke="#c8c0a0" stroke-width="1"/>
   <circle cx="246.5" cy="50.5" r="5" fill="#fff" stroke="#000" stroke-width="1.6"/>
   <path d="M246.5 47.5 L246.5 53.5 M243.5 50.5 L249.5 50.5" stroke="#000" stroke-width="1.8"/>
   <rect x="238.5" y="64.5" width="23" height="25" fill="#fff" stroke="#a8a8a8" stroke-width="1.4"/>
   <path d="M239.2 65.2 L261 89 L239.2 89 Z" fill="#a9b4bc"/>
  </svg>
  <div class="a" style="left:2px;top:93.5px;width:262px;height:2px;border-top:1px solid #a0a0a0;border-bottom:1px solid #fff"></div>
  <!-- tabs -->
  <div class="a" style="left:3px;top:102px;width:76px;height:24px;background:#f4f4f4;border-right:2px solid #a8a8a8;border-top:1px solid #fff;border-left:1px solid #fff;border-radius:2px 2px 0 0"></div>
  <span class="a t13" style="left:9px;top:105.5px">Auswählen</span>
  <div class="a" style="left:79px;top:104px;width:71px;height:22px;border-right:2px solid #a8a8a8;border-top:1px solid #fff"></div>
  <span class="a t13" style="left:83.5px;top:107.5px">Bearbeiten</span>
  <svg class="a" style="left:238px;top:100px" width="26" height="24" viewBox="0 0 26 24">
   <path d="M5 20 L14 10 L16.5 12.5 L7.5 22 Z" fill="#e88a3a" stroke="#6a3a10" stroke-width=".8"/>
   <path d="M13 9 L18 4 Q21 2 22 4.5 Q23 6.5 20.5 8.5 L16 13.5 Z" fill="#111"/>
   <path d="M9 22 L24 18" stroke="#b0a898" stroke-width="1"/>
  </svg>
  <!-- nav -->
  <svg class="a" style="left:8px;top:126.5px" width="85" height="26" viewBox="0 0 85 26">
   <path d="M3.5 13 L10.5 5 L10.5 9.5 L16.5 9.5 L16.5 16.5 L10.5 16.5 L10.5 21 Z" fill="#fff" stroke="#8a8a8a" stroke-width="1.8" stroke-linejoin="round"/>
   <path d="M46.5 13 L39.5 5 L39.5 9.5 L33.5 9.5 L33.5 16.5 L39.5 16.5 L39.5 21 Z" fill="#fff" stroke="#8a8a8a" stroke-width="1.8" stroke-linejoin="round"/>
   <path d="M59 12.5 L67 5 L75 12.5 L73 12.5 L73 21 L61 21 L61 12.5 Z" fill="#fff" stroke="#000" stroke-width="2.2" stroke-linejoin="round"/>
   <rect x="65.5" y="15" width="3" height="6" fill="#000"/>
  </svg>
  <div class="a" style="left:90.5px;top:126.5px;width:143px;height:26px;background:#fff;border:1px solid #8a8a8a;box-shadow:inset 1px 1px 0 #5a5a5a"></div>
  <span class="a t13" style="left:95px;top:132.5px">Farben mit Bezeichn</span>
  <div class="a" style="left:95.5px;top:149px;width:113px;height:1.4px;background:#000"></div>
  <div class="a" style="left:212.5px;top:128px;width:20px;height:23px;background:linear-gradient(#f4f4f4,#e0e0e0);border-left:1px solid #c0c0c0;border-bottom:1px solid #a0a0a0"></div>
  <svg class="a" style="left:215px;top:136px" width="14" height="8" viewBox="0 0 14 8"><path d="M2 1 L12 1 L7 7 Z" fill="#000"/></svg>
  <svg class="a" style="left:241px;top:127px" width="18" height="26" viewBox="0 0 18 26">
   <path d="M9 5 L15 13 L9 21 Z" fill="#000"/>
   <rect x="3" y="8" width="8" height="11" fill="#fff" stroke="#000" stroke-width="1.3"/>
   <path d="M5 11 L9 11 M5 14 L9 14 M5 16.5 L9 16.5" stroke="#4a6a9a" stroke-width="1"/>
  </svg>
  <div class="a" style="left:2px;top:157px;width:262px;height:2px;border-top:1px solid #a0a0a0;border-bottom:1px solid #fff"></div>
  <!-- list -->
  <div class="a" style="left:1.5px;top:160px;width:243px;height:254px;background:#fff;overflow:hidden">
   <div class="a" style="left:2.2px;top:1.4px;width:49.5px;height:49px;border:1px solid #9a9a9a;background:#fff;padding:1px"><div style="width:100%;height:100%;background:#de6f91"></div></div><div class="a" style="left:54.2px;top:1.4px;width:49.5px;height:49px;border:1px solid #9a9a9a;background:#fff;padding:1px"><div style="width:100%;height:100%;background:#c71585"></div></div><div class="a" style="left:106.2px;top:1.4px;width:49.5px;height:49px;border:1px solid #9a9a9a;background:#fff;padding:1px"><div style="width:100%;height:100%;background:#ff1493"></div></div><div class="a" style="left:158.2px;top:1.4px;width:49.5px;height:49px;border:1px solid #9a9a9a;background:#fff;padding:1px"><div style="width:100%;height:100%;background:#ff69b4"></div></div><div class="a" style="left:2.2px;top:53.4px;width:49.5px;height:49px;border:1px solid #9a9a9a;background:#fff;padding:1px"><div style="width:100%;height:100%;background:#ffb6c1"></div></div><div class="a" style="left:54.2px;top:53.4px;width:49.5px;height:49px;border:1px solid #9a9a9a;background:#fff;padding:1px"><div style="width:100%;height:100%;background:#ffc0cb"></div></div><div class="a" style="left:106.2px;top:53.4px;width:49.5px;height:49px;border:1px solid #9a9a9a;background:#fff;padding:1px"><div style="width:100%;height:100%;background:#ffe4e1"></div></div><div class="a" style="left:158.2px;top:53.4px;width:49.5px;height:49px;border:1px solid #9a9a9a;background:#fff;padding:1px"><div style="width:100%;height:100%;background:#fff0f5"></div></div><div class="a" style="left:2.2px;top:105.4px;width:49.5px;height:49px;border:1px solid #9a9a9a;background:#fff;padding:1px"><div style="width:100%;height:100%;background:#faf0e6"></div></div><div class="a" style="left:54.2px;top:105.4px;width:49.5px;height:49px;border:1px solid #9a9a9a;background:#fff;padding:1px"><div style="width:100%;height:100%;background:#fffafa"></div></div><div class="a" style="left:106.2px;top:105.4px;width:49.5px;height:49px;border:1px solid #9a9a9a;background:#fff;padding:1px"><div style="width:100%;height:100%;background:#fff5ee"></div></div><div class="a" style="left:158.2px;top:105.4px;width:49.5px;height:49px;border:1px solid #9a9a9a;background:#fff;padding:1px"><div style="width:100%;height:100%;background:#ffe4c4"></div></div><div class="a" style="left:2.2px;top:157.4px;width:49.5px;height:49px;border:1px solid #9a9a9a;background:#fff;padding:1px"><div style="width:100%;height:100%;background:#f08080"></div></div><div class="a" style="left:54.2px;top:157.4px;width:49.5px;height:49px;border:1px solid #9a9a9a;background:#fff;padding:1px"><div style="width:100%;height:100%;background:#e9967a"></div></div><div class="a" style="left:106.2px;top:157.4px;width:49.5px;height:49px;border:1px solid #9a9a9a;background:#fff;padding:1px"><div style="width:100%;height:100%;background:#fa8072"></div></div><div class="a" style="left:158.2px;top:157.4px;width:49.5px;height:49px;border:1px solid #9a9a9a;background:#fff;padding:1px"><div style="width:100%;height:100%;background:#ff6347"></div></div><div class="a" style="left:2.2px;top:209.4px;width:49.5px;height:49px;border:1px solid #9a9a9a;background:#fff;padding:1px"><div style="width:100%;height:100%;background:#cd5c5c"></div></div><div class="a" style="left:54.2px;top:209.4px;width:49.5px;height:49px;border:1px solid #9a9a9a;background:#fff;padding:1px"><div style="width:100%;height:100%;background:#a52a2a"></div></div><div class="a" style="left:106.2px;top:209.4px;width:49.5px;height:49px;border:1px solid #9a9a9a;background:#fff;padding:1px"><div style="width:100%;height:100%;background:#dc143c"></div></div><div class="a" style="left:158.2px;top:209.4px;width:49.5px;height:49px;border:1px solid #9a9a9a;background:#fff;padding:1px"><div style="width:100%;height:100%;background:#ff0000"></div></div>
  </div>
  <!-- scrollbar -->
  <div class="a" style="left:244.5px;top:160px;width:20px;height:254px;background:linear-gradient(90deg,#e6e6e6,#eeeeee)"></div>
  <svg class="a" style="left:244.5px;top:160px" width="20" height="254" viewBox="0 0 20 254">
   <path d="M6 13 L10 8.5 L14 13 Z" fill="#505050"/>
   <path d="M6 241 L10 245.5 L14 241 Z" fill="#505050"/>
   <rect x="1.5" y="22.5" width="17" height="18" rx="2" fill="#f0f0f0" stroke="#9a9a9a" stroke-width="1"/>
   <path d="M6 28 L14 28 M6 31.5 L14 31.5 M6 35 L14 35" stroke="#5a5a5a" stroke-width="1"/>
  </svg>
 </div>
</div>
<div id="status" class="a"></div>
<div class="a" style="left:0;top:2083px;width:3840px;height:1.5px;background:#d8d8d8"></div>
<div class="a" style="left:0;top:2084.5px;width:3840px;height:1px;background:#fafafa"></div>
<svg class="a" style="left:0;top:2085px" width="130" height="26" viewBox="0 2085 130 26">
 <circle cx="12.8" cy="2097.8" r="8.8" fill="#fff" stroke="#8e8e8e" stroke-width="2"/>
 <path d="M10.5 2096.5 L15.1 2096.5 L12.8 2102 Z" fill="#8a8a8a"/>
 <circle cx="12.8" cy="2095.3" r="2.9" fill="#8a8a8a"/>
 <circle cx="42.9" cy="2097.8" r="8.6" fill="#fff" stroke="#000" stroke-width="2.4"/>
 <circle cx="42.9" cy="2093.3" r="1.6" fill="#000"/>
 <path d="M41 2095.5 L44.8 2095.5 L45.3 2099.5 L44.2 2099.5 L44.2 2102.7 L41.6 2102.7 L41.6 2099.5 L40.5 2099.5 Z" fill="#000"/>
 <circle cx="72.8" cy="2097.8" r="8.8" fill="#fff" stroke="#8e8e8e" stroke-width="2"/>
 <circle cx="72.8" cy="2094.6" r="3" fill="#8a8a8a"/>
 <path d="M67.8 2102.5 Q67.8 2099.5 70 2099.5 L75.6 2099.5 Q77.8 2099.5 77.8 2102.5 L77.8 2104.5 L67.8 2104.5 Z" fill="#8a8a8a"/>
 <rect x="92" y="2094.3" width="1" height="8.5" fill="#6a6a6a"/>
 <circle cx="106.8" cy="2097.8" r="8.6" fill="#1f63ae" stroke="#0a0f1e" stroke-width="1.8"/>
 <text x="102.3" y="2102.8" font-size="13" font-weight="bold" fill="#fff" font-family="Liberation Sans">?</text>
</svg>
<span class="a" style="left:132.6px;top:2092px;font-size:13.06px;color:#000;white-space:pre">Ziehen Sie den Mauszeiger, um die Fläche zu drücken oder zu ziehen, oder geben Sie einen Wert ein.  Strg = Neue Anfangsfläche erstellen ein/aus</span>
<div class="a" style="left:3567px;top:2095px;width:1px;height:9px;background:#7a7a7a"></div>
<span class="a" style="left:3578px;top:2091.5px;font-size:12.9px;color:#000;white-space:pre">Abstand</span>
<div class="a" style="left:3635.5px;top:2087px;width:199px;height:25px;background:#fff;border:1px solid #a9b6c6;border-bottom:none"></div>
<span class="a" style="left:3637.7px;top:2094px;font-size:12.6px;color:#000;white-space:pre">8,000000mm</span>

<div id="task" class="a"></div>
<div class="a" style="left:0;top:2112px;width:3840px;height:1px;background:#0e1216"></div>
<div class="a" style="left:0;top:2113px;width:3840px;height:1px;background:#4a545e;opacity:.7"></div>
<svg class="a" style="left:0;top:2112px" width="1480" height="48" viewBox="0 2112 1480 48">
<defs>
 <linearGradient id="tbtn" x1="0" y1="0" x2="0" y2="1"><stop offset="0" stop-color="#58606a"/><stop offset=".5" stop-color="#3c444d"/><stop offset="1" stop-color="#2c333b"/></linearGradient>
 <linearGradient id="tbtnA" x1="0" y1="0" x2="0" y2="1"><stop offset="0" stop-color="#b4b9be"/><stop offset=".5" stop-color="#8c9298"/><stop offset="1" stop-color="#6c737a"/></linearGradient>
 <radialGradient id="orb" cx=".5" cy=".35" r=".65"><stop offset="0" stop-color="#6ab8e8"/><stop offset=".55" stop-color="#2a6aa8"/><stop offset=".85" stop-color="#143c6a"/><stop offset="1" stop-color="#2ac0f0"/></radialGradient>
 <linearGradient id="fold" x1="0" y1="0" x2="0" y2="1"><stop offset="0" stop-color="#fbe9a6"/><stop offset="1" stop-color="#e8c860"/></linearGradient>
</defs>
<!-- running app buttons -->
<g stroke="#0c0f12" stroke-width="1">
 <rect x="422.5" y="2113.5" width="65" height="45" rx="2.5" fill="url(#tbtn)"/>
 <rect x="842.5" y="2113.5" width="65" height="45" rx="2.5" fill="url(#tbtn)"/>
 <rect x="982.5" y="2113.5" width="65" height="45" rx="2.5" fill="url(#tbtn)"/>
 <rect x="1052.5" y="2113.5" width="65" height="45" rx="2.5" fill="url(#tbtn)"/>
 <rect x="1122.5" y="2113.5" width="65" height="45" rx="2.5" fill="url(#tbtn)"/>
 <rect x="1192.5" y="2113.5" width="65" height="45" rx="2.5" fill="url(#tbtn)"/>
 <rect x="1262.5" y="2113.5" width="65" height="45" rx="2.5" fill="url(#tbtn)"/>
 <rect x="1332" y="2113.5" width="61" height="45" rx="2.5" fill="url(#tbtnA)"/>
 <rect x="1394.5" y="2113.5" width="3" height="45" fill="#3c444d"/>
 <rect x="1402.5" y="2113.5" width="65" height="45" rx="2.5" fill="url(#tbtn)"/>
</g>
<!-- start orb -->
<circle cx="33" cy="2136" r="21.5" fill="url(#orb)" stroke="#8ab8d8" stroke-width="1.2"/>
<path d="M22 2124 Q27 2121 32 2124 L30 2134 Q25 2131 20 2134 Z" fill="#f05a28"/>
<path d="M34 2124 Q39 2127 44 2124 L42 2134 Q37 2137 32 2134 Z" fill="#7ac040"/>
<path d="M20 2136 Q25 2133 30 2136 L28 2146 Q23 2143 18 2146 Z" fill="#3aa8f0"/>
<path d="M32 2136 Q37 2139 42 2136 L40 2146 Q35 2149 30 2146 Z" fill="#fcc820"/>
<!-- explorer -->
<path d="M86 2124 L92 2119 L104 2119 L106 2122 L124 2122 L124 2154 L86 2154 Z" fill="url(#fold)" stroke="#b89a40" stroke-width="1"/>
<path d="M92 2119 L104 2119 L104 2124 L92 2124 Z" fill="#fff"/>
<rect x="91" y="2138" width="28" height="16" rx="2" fill="#7ec0e8"/>
<rect x="98" y="2146" width="14" height="4" fill="#e8c860"/>
<!-- red/black swoosh -->
<path d="M161 2131 Q175 2122 190 2128 Q180 2127 172 2134 Q168 2132 161 2131 Z" fill="#d81a2a"/>
<path d="M159 2144 Q170 2146 178 2138 Q186 2136 193 2144 Q178 2152 159 2144 Z" fill="#0a0a0a"/>
<!-- media player -->
<rect x="226" y="2122" width="30" height="32" fill="#8cc8ec" stroke="#4a90c8" stroke-width="1"/>
<rect x="253" y="2124" width="6" height="30" fill="#a8d8f4"/>
<circle cx="240" cy="2138" r="10.5" fill="#f0801e"/>
<path d="M236 2132 L246 2138 L236 2144 Z" fill="#fff"/>
<!-- remote desktop -->
<path d="M297 2117 L330 2122 L328 2145 L298 2140 Z" fill="#1a3ad0" stroke="#c8c8c8" stroke-width="2"/>
<ellipse cx="311" cy="2151" rx="10" ry="4" fill="#ccc"/>
<circle cx="325" cy="2149" r="8" fill="#d8d8d8" stroke="#999" stroke-width="1"/>
<path d="M321 2150 L324 2147 M329 2148 L326 2151" stroke="#3a9a3a" stroke-width="1.6"/>
<!-- OMS -->
<rect x="365.5" y="2116.5" width="39" height="38" fill="#e8e8e8" stroke="#222" stroke-width="1"/>
<text x="367" y="2128" font-size="11" font-weight="bold" fill="#1a3aa0" font-family="Liberation Sans">OMS</text>
<path d="M380 2132 L386 2130 L386 2152 L380 2150 Z M386 2140 L396 2140 L396 2136 L402 2142 L396 2148 L396 2144 L386 2144" fill="#d8d8d8" stroke="#222" stroke-width="1"/>
<path d="M368 2152 L378 2152" stroke="#222" stroke-width="1"/>
<!-- firefox -->
<circle cx="457" cy="2134" r="13" fill="#1e5cb0"/>
<circle cx="460" cy="2130" r="7" fill="#3a9ae0" opacity=".8"/>
<path d="M441.5 2131 Q440 2148 455 2152 Q471 2154 473 2138 Q473 2126 466 2121 Q470 2130 465 2140 Q459 2148 449 2143 Q444 2139 446 2131 Q448 2127 452 2127 Q447 2124 445 2119 Q442 2124 441.5 2131 Z" fill="#f26b1d"/>
<path d="M466 2121 Q473 2128 472 2140 Q470 2150 461 2152 Q469 2146 469 2136 Q469 2128 466 2121 Z" fill="#fbc02d"/>
<!-- IE -->
<path d="M538.5 2139.5 L515 2139.5 Q516 2148 525 2148 Q531 2148 534 2144 L539 2144 Q535 2154 525 2154 Q511 2154 510.5 2138 Q511 2122 525.5 2122 Q539 2122.5 539 2136 Z M515.5 2134 L533.5 2134 Q532.5 2127.5 525 2127.5 Q517 2127.5 515.5 2134 Z" fill="#2aa4e4" fill-rule="evenodd"/>
<path d="M509 2154 Q500 2144 519 2127 Q536 2114 543 2119 Q546 2124 536 2133" fill="none" stroke="#f2c21a" stroke-width="2.4"/>
<!-- mail -->
<rect x="576" y="2124" width="37" height="26" fill="#f0f0f0"/>
<path d="M576 2124 L594.5 2138 L613 2124 Z" fill="#d41a1a"/>
<!-- car -->
<circle cx="664.5" cy="2136.5" r="19" fill="#1a8ad8" stroke="#50c0f0" stroke-width="1.5"/>
<path d="M652 2140 L655 2131 L674 2131 L677 2140 L677 2145 L652 2145 Z" fill="#e8f4fa"/>
<!-- DESIGN -->
<rect x="716" y="2118" width="39" height="37" fill="#e87a1a"/>
<rect x="719.5" y="2121" width="32" height="31" fill="#fff" stroke="#222" stroke-width="1"/>
<text x="721" y="2132" font-size="8" font-weight="bold" fill="#111" font-family="Liberation Sans">DESIGN</text>
<g fill="#111"><rect x="723" y="2135" width="1.5" height="14"/><rect x="727" y="2135" width="1" height="14"/><rect x="730" y="2135" width="2" height="14"/><rect x="734" y="2135" width="1" height="14"/><rect x="737" y="2135" width="2" height="14"/><rect x="741" y="2135" width="1" height="14"/><rect x="744" y="2135" width="2" height="14"/></g>
<!-- B star 1 -->
<rect x="785" y="2117" width="39" height="38" rx="4" fill="#d8dcdf"/>
<text x="788" y="2131" font-size="11" font-weight="bold" font-style="italic" fill="#1a3a6a" font-family="Liberation Sans">B</text>
<path d="M796 2150 L806 2140 L800 2136 L808 2136 L820 2124 L812 2138 L816 2142 L808 2142 Z" fill="#1e4a7a"/>
<!-- chrome -->
<circle cx="875" cy="2136" r="17" fill="#db3a2a"/>
<path d="M875 2136 L890 2144 A17 17 0 0 1 860 2146 Z" fill="#2aa04a"/>
<path d="M875 2136 L892 2132 A17 17 0 0 1 877 2153 Z" fill="#fcc820"/>
<circle cx="875" cy="2136" r="7.5" fill="#fff"/><circle cx="875" cy="2136" r="6" fill="#3a7ae0"/>
<!-- compass -->
<circle cx="944" cy="2136" r="18" fill="#3a8ad8" stroke="#a8d8f8" stroke-width="1.5"/>
<circle cx="944" cy="2136" r="10" fill="#f0b040"/>
<path d="M944 2124 L946 2136 L944 2148 L942 2136 Z" fill="#fff"/>
<!-- scanner -->
<rect x="996" y="2135" width="37" height="14" fill="#e0e0e0" stroke="#222" stroke-width="1"/>
<circle cx="1014" cy="2142" r="5" fill="#1a3aa0" stroke="#222" stroke-width="1"/>
<text x="1000" y="2130" font-size="10" font-weight="bold" fill="#1a3aa0" font-family="Liberation Sans">S</text>
<path d="M1015 2118 L1020 2122 L1028 2118 L1026 2126 L1032 2130 L1014 2132 Z" fill="#fff" stroke="#222" stroke-width="1"/>
<!-- skype -->
<circle cx="1085" cy="2136" r="17" fill="#1aa8e8"/>
<text x="1075" y="2146" font-size="26" font-weight="bold" fill="#fff" font-family="Liberation Sans">S</text>
<!-- thunderbird -->
<circle cx="1155" cy="2136" r="17" fill="#2a6ac8"/>
<path d="M1140 2135 L1162 2128 L1168 2146 L1146 2152 Z" fill="#e8e4d8" stroke="#9a968a" stroke-width="1"/>
<!-- acrobat -->
<rect x="1207" y="2117" width="36" height="37" fill="#c8080e"/>
<path d="M1215 2148 Q1225 2118 1226 2126 Q1224 2138 1236 2146 Q1222 2140 1215 2148 Z" fill="none" stroke="#fff" stroke-width="1.6"/>
<!-- B star 2 -->
<rect x="1275" y="2117" width="39" height="38" rx="4" fill="#d8dcdf"/>
<text x="1278" y="2131" font-size="11" font-weight="bold" font-style="italic" fill="#1a3a6a" font-family="Liberation Sans">B</text>
<path d="M1286 2150 L1296 2140 L1290 2136 L1298 2136 L1310 2124 L1302 2138 L1306 2142 L1298 2142 Z" fill="#1e4a7a"/>
<!-- sketchup -->
<path d="M1346 2126 L1368 2118 L1378 2124 L1378 2148 L1358 2156 L1346 2148 Z" fill="#e02828"/>
<path d="M1348 2127 L1368 2120 L1376 2125 L1356 2132 Z" fill="#ff6060"/>
<path d="M1352 2135 L1366 2130 L1366 2134 L1356 2138 L1356 2146 L1352 2147 Z" fill="#fff"/>
<!-- paint -->
<ellipse cx="1432" cy="2140" rx="17" ry="12" fill="#b8d8f0" transform="rotate(-25 1432 2140)"/>
<circle cx="1425" cy="2136" r="2.5" fill="#e03030"/><circle cx="1432" cy="2131" r="2.5" fill="#30b030"/><circle cx="1440" cy="2129" r="2.5" fill="#f0c020"/>
<path d="M1434 2154 L1452 2122" stroke="#e8a030" stroke-width="3"/>
</svg>
<!-- tray -->
<span class="a" style="left:3571.5px;top:2127px;font-size:13.3px;color:#fff;white-space:pre">DE</span>
<svg class="a" style="left:3600px;top:2112px" width="240" height="48" viewBox="3600 2112 240 48">
 <path d="M3613.5 2138.5 L3618 2134 L3622.5 2138.5 Z" fill="#fff"/>
 <path d="M3643.5 2124 L3643.5 2146" stroke="#fff" stroke-width="1.2"/>
 <path d="M3644 2124.5 L3651 2124.5 L3651 2131 L3644 2131 Z" fill="#f0f0f0"/>
 <path d="M3651 2127 L3659 2128 L3659 2133 L3651 2132 Z" fill="#d0d0d0"/>
 <circle cx="3655.5" cy="2141" r="4.8" fill="#d81a1a" stroke="#fff" stroke-width="1"/>
 <path d="M3653 2139 L3657 2143 M3657 2139 L3653 2143" stroke="#fff" stroke-width="1.2"/>
 <rect x="3672.5" y="2124.5" width="4" height="8" fill="#c8c8c8" stroke="#888" stroke-width="1"/>
 <rect x="3676.5" y="2128.5" width="13" height="10" fill="#2a2a2a" stroke="#e0e0e0" stroke-width="1.2"/>
 <path d="M3683 2139 L3683 2142 M3678 2142.5 L3688 2142.5" stroke="#e0e0e0" stroke-width="1.3"/>
 <path d="M3674.5 2132 L3674.5 2142" stroke="#e0e0e0" stroke-width="1"/>
 <path d="M3702 2130 L3705 2130 L3710 2125 L3710 2148 L3705 2142 L3702 2142 Z" fill="#f0f0f0"/>
 <path d="M3713 2132 Q3715 2136 3713 2140 M3716 2130 Q3719 2136 3716 2143 M3719 2128 Q3723 2136 3719 2145" fill="none" stroke="#e8e8e8" stroke-width="1.1"/>
 <rect x="3827" y="2114" width="13" height="46" fill="#30383f" stroke="#5a636b" stroke-width="1"/>
</svg>
<span class="a" style="left:3759.5px;top:2119px;font-size:14px;color:#fff;white-space:pre">09:20</span>
<span class="a" style="left:3742px;top:2140.5px;font-size:13.8px;color:#fff;white-space:pre">05.02.2015</span>

</body></html>
